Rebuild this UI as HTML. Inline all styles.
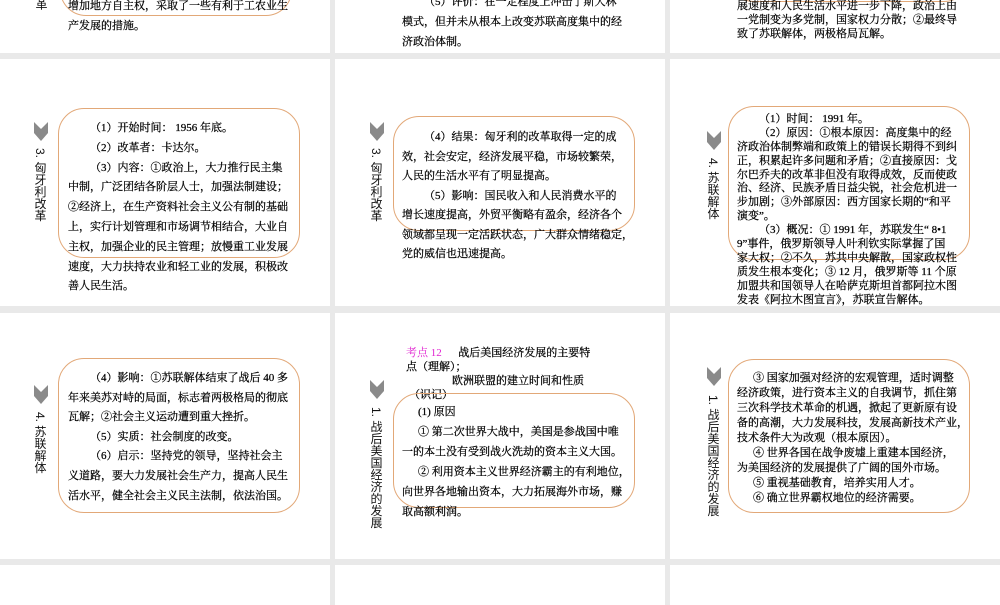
<!DOCTYPE html>
<html><head><meta charset="utf-8">
<style>
*{margin:0;padding:0;box-sizing:border-box}
body{width:1000px;height:600px;background:#e9e9e9;position:relative;overflow:hidden;font-family:"Liberation Serif","Noto Serif CJK SC","Noto Sans CJK SC",serif;color:#000}
.s{position:absolute;background:#fff;overflow:hidden}
.box{position:absolute;border:1px solid #e2a878;border-radius:26px}
.t{position:absolute;font-size:11px;white-space:nowrap;-webkit-text-stroke:0.25px #000}
.t div{height:var(--lh)}
.i{padding-left:22px}
.lab{position:absolute;writing-mode:vertical-rl;font-size:12px;line-height:12px;font-family:"Liberation Sans","Noto Sans CJK SC",sans-serif;color:#111}
.chev{position:absolute;width:14px;height:19px}
</style></head><body>
<!-- row 0 -->
<div class="s" style="left:0;top:0;width:330px;height:53px">
  <div class="box" style="left:60px;top:-40px;width:232px;height:56px"></div>
  <div class="lab" style="left:35px;top:-2px">革</div>
  <div class="t" style="left:68px;top:-3px;--lh:20px"><div>增加地方自主权，采取了一些有利于工农业生</div><div>产发展的措施。</div></div>
</div>
<div class="s" style="left:335px;top:0;width:330px;height:53px">
  <div class="t" style="left:67px;top:-7px;--lh:20px"><div class="i">（5）评价：在一定程度上冲击了斯大林</div><div>模式，但并未从根本上改变苏联高度集中的经</div><div>济政治体制。</div></div>
</div>
<div class="s" style="left:670px;top:0;width:330px;height:53px">
  <div class="box" style="left:58px;top:-60px;width:242px;height:62px"></div>
  <div class="t" style="left:67px;top:-3px;--lh:14px"><div>展速度和人民生活水平进一步下降，政治上由</div><div>一党制变为多党制，国家权力分散；②最终导</div><div>致了苏联解体，两极格局瓦解。</div></div>
</div>
<!-- row 1 -->
<div class="s" style="left:0;top:59px;width:330px;height:247px">
  <svg class="chev" style="left:34px;top:63px" viewBox="0 0 14 19"><polygon points="0,0 7,7 14,0 14,11 7,19 0,11" fill="#8a8a8a"/></svg>
  <div class="lab" style="left:34px;top:89px">3. 匈牙利改革</div>
  <div class="box" style="left:58px;top:49px;width:242px;height:150px"></div>
  <div class="t" style="left:68px;top:60px;--lh:19.8px"><div class="i">（1）开始时间： 1956 年底。</div><div class="i">（2）改革者：卡达尔。</div><div class="i">（3）内容：①政治上，大力推行民主集</div><div>中制，广泛团结各阶层人士，加强法制建设；</div><div>②经济上，在生产资料社会主义公有制的基础</div><div>上，实行计划管理和市场调节相结合，大业自</div><div>主权，加强企业的民主管理；放慢重工业发展</div><div>速度，大力扶持农业和轻工业的发展，积极改</div><div>善人民生活。</div></div>
</div>
<div class="s" style="left:335px;top:59px;width:330px;height:247px">
  <svg class="chev" style="left:35px;top:63px" viewBox="0 0 14 19"><polygon points="0,0 7,7 14,0 14,11 7,19 0,11" fill="#8a8a8a"/></svg>
  <div class="lab" style="left:35px;top:89px">3. 匈牙利改革</div>
  <div class="box" style="left:58px;top:57px;width:242px;height:115px"></div>
  <div class="t" style="left:67px;top:69px;--lh:19.5px"><div class="i">（4）结果：匈牙利的改革取得一定的成</div><div>效，社会安定，经济发展平稳，市场较繁荣，</div><div>人民的生活水平有了明显提高。</div><div class="i">（5）影响：国民收入和人民消费水平的</div><div>增长速度提高，外贸平衡略有盈余，经济各个</div><div>领域都呈现一定活跃状态，广大群众情绪稳定，</div><div>党的威信也迅速提高。</div></div>
</div>
<div class="s" style="left:670px;top:59px;width:330px;height:247px">
  <svg class="chev" style="left:37px;top:72px" viewBox="0 0 14 19"><polygon points="0,0 7,7 14,0 14,11 7,19 0,11" fill="#8a8a8a"/></svg>
  <div class="lab" style="left:37px;top:99px">4. 苏联解体</div>
  <div class="box" style="left:58px;top:47px;width:242px;height:154px"></div>
  <div class="t" style="left:67px;top:51px;--lh:13.9px"><div class="i">（1）时间： 1991 年。</div><div class="i">（2）原因：①根本原因：高度集中的经</div><div>济政治体制弊端和政策上的错误长期得不到纠</div><div>正，积累起许多问题和矛盾；②直接原因：戈</div><div>尔巴乔夫的改革非但没有取得成效，反而使政</div><div>治、经济、民族矛盾日益尖锐，社会危机进一</div><div>步加剧；③外部原因：西方国家长期的“和平</div><div>演变”。</div><div class="i">（3）概况：① 1991 年，苏联发生“ 8•1</div><div>9”事件，俄罗斯领导人叶利钦实际掌握了国</div><div>家大权；②不久，苏共中央解散，国家政权性</div><div>质发生根本变化；③ 12 月，俄罗斯等 11 个原</div><div>加盟共和国领导人在哈萨克斯坦首都阿拉木图</div><div>发表《阿拉木图宣言》，苏联宣告解体。</div></div>
</div>
<!-- row 2 -->
<div class="s" style="left:0;top:313px;width:330px;height:246px">
  <svg class="chev" style="left:34px;top:72px" viewBox="0 0 14 19"><polygon points="0,0 7,7 14,0 14,11 7,19 0,11" fill="#8a8a8a"/></svg>
  <div class="lab" style="left:34px;top:99px">4. 苏联解体</div>
  <div class="box" style="left:58px;top:45px;width:242px;height:155px"></div>
  <div class="t" style="left:68px;top:56px;--lh:19.6px"><div class="i">（4）影响：①苏联解体结束了战后 40 多</div><div>年来美苏对峙的局面，标志着两极格局的彻底</div><div>瓦解；②社会主义运动遭到重大挫折。</div><div class="i">（5）实质：社会制度的改变。</div><div class="i">（6）启示：坚持党的领导，坚持社会主</div><div>义道路，要大力发展社会生产力，提高人民生</div><div>活水平，健全社会主义民主法制，依法治国。</div></div>
</div>
<div class="s" style="left:335px;top:313px;width:330px;height:246px">
  <div class="t" style="left:71px;top:31px;--lh:14px"><div><span style="color:#e020d0;-webkit-text-stroke:0">考点 12</span>&nbsp;&nbsp;&nbsp;&nbsp;&nbsp;&nbsp;战后美国经济发展的主要特</div><div>点（理解）；</div><div style="padding-left:46px">欧洲联盟的建立时间和性质</div><div style="padding-left:3px">（识记）</div></div>
  <svg class="chev" style="left:35px;top:67px" viewBox="0 0 14 19"><polygon points="0,0 7,7 14,0 14,11 7,19 0,11" fill="#8a8a8a"/></svg>
  <div class="lab" style="left:35px;top:94px">1. 战后美国经济的发展</div>
  <div class="box" style="left:58px;top:80px;width:242px;height:115px"></div>
  <div class="t" style="left:67px;top:90px;--lh:20px"><div style="padding-left:16px">(1) 原因</div><div style="padding-left:16px">① 第二次世界大战中，美国是参战国中唯</div><div>一的本土没有受到战火洗劫的资本主义大国。</div><div style="padding-left:16px">② 利用资本主义世界经济霸主的有利地位，</div><div>向世界各地输出资本，大力拓展海外市场，赚</div><div>取高额利润。</div></div>
</div>
<div class="s" style="left:670px;top:313px;width:330px;height:246px">
  <svg class="chev" style="left:37px;top:54px" viewBox="0 0 14 19"><polygon points="0,0 7,7 14,0 14,11 7,19 0,11" fill="#8a8a8a"/></svg>
  <div class="lab" style="left:37px;top:82px">1. 战后美国经济的发展</div>
  <div class="box" style="left:58px;top:46px;width:242px;height:154px"></div>
  <div class="t" style="left:67px;top:56px;--lh:15px"><div style="padding-left:16px">③ 国家加强对经济的宏观管理，适时调整</div><div>经济政策，进行资本主义的自我调节，抓住第</div><div>三次科学技术革命的机遇，掀起了更新原有设</div><div>备的高潮，大力发展科技，发展高新技术产业，</div><div>技术条件大为改观（根本原因）。</div><div style="padding-left:16px">④ 世界各国在战争废墟上重建本国经济，</div><div>为美国经济的发展提供了广阔的国外市场。</div><div style="padding-left:16px">⑤ 重视基础教育，培养实用人才。</div><div style="padding-left:16px">⑥ 确立世界霸权地位的经济需要。</div></div>
</div>
<!-- row 3 -->
<div class="s" style="left:0;top:565px;width:330px;height:40px"></div>
<div class="s" style="left:335px;top:565px;width:330px;height:40px"></div>
<div class="s" style="left:670px;top:565px;width:330px;height:40px"></div>
</body></html>
